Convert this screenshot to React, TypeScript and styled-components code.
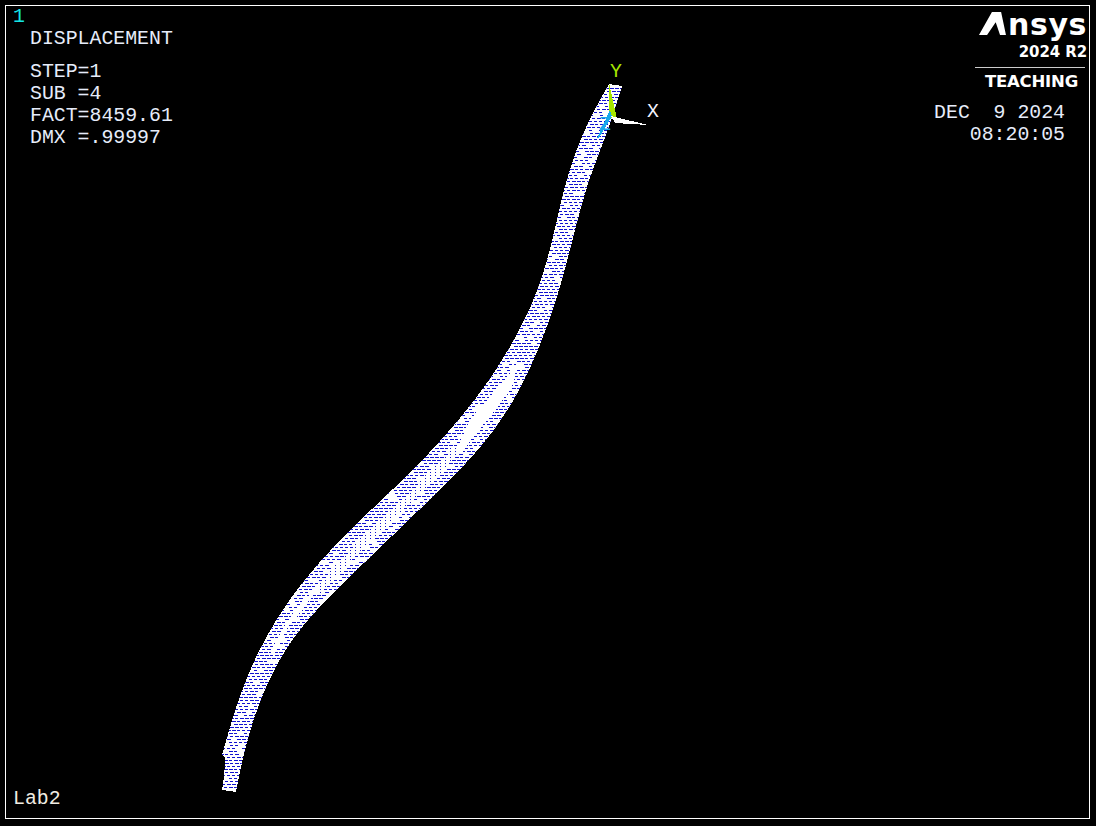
import React from 'react';
import styled, { createGlobalStyle } from 'styled-components';

const GlobalStyle = createGlobalStyle`
  html, body { margin: 0; padding: 0; background: #000; }
  body { width: 1096px; height: 826px; overflow: hidden; }
`;

type Pt = number[];

// points read off the reference are noisy, so average them before drawing
const relax = (pts: Pt[], passes = 2) => {
  let out = pts;
  for (let n = 0; n < passes; n++) {
    out = out.map((p, i) =>
      i === 0 || i === out.length - 1
        ? p
        : [(out[i - 1][0] + 2 * p[0] + out[i + 1][0]) / 4, (out[i - 1][1] + 2 * p[1] + out[i + 1][1]) / 4],
    );
  }
  return out;
};

// beam outline, top to bottom
const leftEdge = relax([[609,84],[597,103],[588,123],[578,143],[570,167],[563,190],[557,220],[551,247],[545,270],[537,293],[527,317],[515,340],[490,383],[463,418],[430,453],[397,487],[363,517],[338,540],[298,583],[275,618],[255,655],[240,690],[230,727],[222,755]]);
const rightEdge = relax([[622,86],[615,107],[607,137],[597,157],[588,180],[582,203],[575,230],[568,257],[562,283],[552,313],[542,343],[520,397],[497,433],[463,468],[430,500],[397,530],[370,558],[345,582],[315,608],[292,637],[275,663],[260,697],[248,733],[240,767],[236,792]]);
const footEdge: Pt[] = [[222,755],[225,758],[225,763],[224,777],[222,790],[236,792]];

const smooth = (pts: Pt[]) => {
  let d = '';
  for (let i = 0; i < pts.length - 1; i++) {
    const a = pts[Math.max(i - 1, 0)], b = pts[i], c = pts[i + 1], e = pts[Math.min(i + 2, pts.length - 1)];
    const c1 = [b[0] + (c[0] - a[0]) / 6, b[1] + (c[1] - a[1]) / 6];
    const c2 = [c[0] - (e[0] - b[0]) / 6, c[1] - (e[1] - b[1]) / 6];
    d += `C${c1[0].toFixed(1)} ${c1[1].toFixed(1)} ${c2[0].toFixed(1)} ${c2[1].toFixed(1)} ${c[0].toFixed(1)} ${c[1].toFixed(1)}`;
  }
  return d;
};

const outline = `M609 84${smooth(leftEdge)}L${footEdge.slice(1).map(p => p.join(' ')).join('L')}${smooth([...rightEdge].reverse())}Z`;

const edgeX = (pts: Pt[], y: number) => {
  for (let i = 0; i < pts.length - 1; i++) {
    if (y >= pts[i][1] && y <= pts[i + 1][1]) {
      const f = (y - pts[i][1]) / (pts[i + 1][1] - pts[i][1] || 1);
      return pts[i][0] + f * (pts[i + 1][0] - pts[i][0]);
    }
  }
  return y < pts[0][1] ? pts[0][0] : pts[pts.length - 1][0];
};

const leftProfile = leftEdge.concat(footEdge.slice(2));
const isCore = (across: number) => across > 0.36 && across < 0.64;

// the element mesh: short dashes along the rows, dotted columns where the mesh turns
const buildMesh = () => {
  let d = '';
  let seed = 4711;
  const rand = () => {
    seed = (seed * 16807) % 2147483647;
    return seed / 2147483647;
  };
  let row = 0;
  for (let y = 88; y < 790; y += 3, row++) {
    const l = edgeX(leftProfile, y);
    const r = edgeX(rightEdge, y);
    const start = Math.floor(l / 5) * 5 + (row % 3) * 2;
    for (let x = start; x < r; x += 5) {
      const across = (x - l) / (r - l);
      if (y > 445 && y < 595 && isCore(across)) continue;
      if (rand() < 0.88) {
        const w = 3 + Math.floor(rand() * 2);
        d += `M${x} ${y}h${w}v1h-${w}z`;
      }
    }
  }
  for (let x = 320; x < 480; x += 5) {
    for (let y = 445; y < 595; y += 3) {
      const l = edgeX(leftProfile, y);
      const r = edgeX(rightEdge, y);
      if (isCore((x - l) / (r - l))) d += `M${x} ${y}h1v1h-1z`;
    }
  }
  return d;
};

const meshPath = buildMesh();

const Plot = () => (
  <PlotSvg viewBox="0 0 1096 826">
    <defs>
      <clipPath id="beam">
        <path d={outline} />
      </clipPath>
    </defs>
    <path d={outline} fill="#fff" />
    <path d={meshPath} fill="#1010d0" clipPath="url(#beam)" />
    <polygon points="518,362 512,387 493,413 473,437 462,453 455,453 462,437 470,420 493,393 507,377" fill="#fff" />
    <polygon points="315,593 302,610 288,627 275,653 270,655 278,637 292,615 305,597" fill="#fff" />
    <polygon points="609,83 617,119 609,118" fill="#a6e600" />
    <polygon points="610,110 597,138 599,138 612,116" fill="#18a8ec" />
    <polygon points="611,116 648,125 615,123" fill="#fff" />
  </PlotSvg>
);

export default function App() {
  return (
    <>
      <GlobalStyle />
      <Screen>
        <Frame>
          <Plot />
          <TopRow>
            <Legend>
              <WindowNumber>1</WindowNumber>
              <Title>DISPLACEMENT</Title>
              <Stats>
                <div>STEP=1</div>
                <div>SUB =4</div>
                <div>FACT=8459.61</div>
                <div>DMX =.99997</div>
              </Stats>
            </Legend>
            <AxisLabel $color="#a6e600" $x={604} $y={55}>Y</AxisLabel>
            <AxisLabel $color="#f4f4ff" $x={641} $y={95}>X</AxisLabel>
            <AxisLabel $color="#18a8ec" $x={593} $y={108}>Z</AxisLabel>
            <Brand>
              <LogoWord><LogoA>A</LogoA>nsys</LogoWord>
              <Release>2024 R2</Release>
              <Rule />
              <Edition>TEACHING</Edition>
              <Stamp>
                <div>DEC  9 2024</div>
                <div>08:20:05</div>
              </Stamp>
            </Brand>
          </TopRow>
          <JobName>Lab2</JobName>
        </Frame>
      </Screen>
    </>
  );
}

const Screen = styled.div`
  width: 1096px;
  height: 826px;
  box-sizing: border-box;
  padding: 5px;
  background: #000;
`;

const Frame = styled.div`
  position: relative;
  box-sizing: border-box;
  width: 1085px;
  height: 814px;
  border: 1px solid #fff;
  display: flex;
  flex-direction: column;
  justify-content: space-between;
  font-family: "Liberation Mono", monospace;
  font-size: 19.83px;
  color: #e6ecfa;
`;

const PlotSvg = styled.svg`
  position: absolute;
  left: -6px;
  top: -6px;
  width: 1096px;
  height: 826px;
  shape-rendering: crispEdges;
`;

const TopRow = styled.div`
  position: relative;
  display: flex;
  justify-content: space-between;
  align-items: flex-start;
`;

const Legend = styled.div`
  padding-left: 7px;
`;

const WindowNumber = styled.div`
  color: #14e6e6;
  line-height: 22px;
`;

const Title = styled.div`
  padding-left: 17px;
  line-height: 22px;
`;

const Stats = styled.div`
  padding-left: 17px;
  margin-top: 11px;
  line-height: 22px;
`;

const AxisLabel = styled.div<{ $color: string; $x: number; $y: number }>`
  position: absolute;
  left: ${p => p.$x}px;
  top: ${p => p.$y}px;
  color: ${p => p.$color};
  line-height: 22px;
`;

const Brand = styled.div`
  display: flex;
  flex-direction: column;
  align-items: flex-end;
  padding-right: 2px;
  font-family: "DejaVu Sans", sans-serif;
  font-weight: 700;
  color: #fff;
`;

const LogoWord = styled.div`
  font-size: 30px;
  line-height: 34px;
  letter-spacing: 0.6px;
  margin-top: 2px;
`;

const LogoA = styled.span`
  display: inline-block;
  width: 27px;
  height: 23px;
  margin-right: 2px;
  line-height: 23px;
  vertical-align: 1px;
  color: transparent;
  background: #fff;
  clip-path: polygon(0 100%, 48% 0, 82% 0, 100% 100%, 78% 100%, 62% 45%, 30% 100%);
`;

const Release = styled.div`
  font-size: 15px;
  line-height: 19px;
  letter-spacing: -0.1px;
  margin-top: 1px;
`;

const Rule = styled.div`
  width: 110px;
  height: 1px;
  margin-top: 5px;
  margin-right: 2px;
  background: #ccc;
`;

const Edition = styled.div`
  margin-right: 9px;
  font-size: 16.5px;
  line-height: 28px;
  letter-spacing: -0.2px;
`;

const Stamp = styled.div`
  margin-top: 6px;
  margin-right: 22px;
  font-family: "Liberation Mono", monospace;
  font-weight: 400;
  font-size: 19.83px;
  line-height: 22px;
  color: #e6ecfa;
  text-align: right;
  letter-spacing: 0;
  white-space: pre;
`;

const JobName = styled.div`
  position: relative;
  padding: 0 0 8px 7px;
  line-height: 22px;
  color: #f0ece2;
`;
